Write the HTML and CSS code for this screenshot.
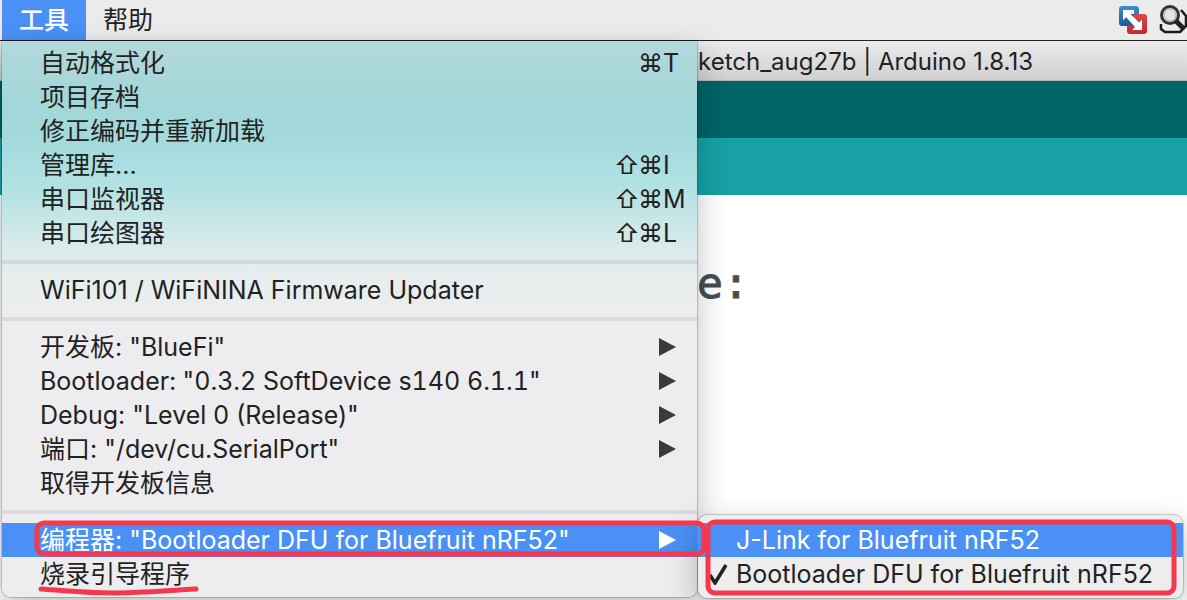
FILE: index.html
```html
<!DOCTYPE html>
<html lang="zh-CN">
<head>
<meta charset="utf-8">
<title>Arduino</title>
<link rel="stylesheet" href="styles.css">
</head>
<body>
<div class="desktop">
  <header class="menubar">
    <nav class="menubar-items">
      <button class="menubar-item active">工具</button>
      <button class="menubar-item">帮助</button>
    </nav>
    <div class="status">
      <svg class="vm-icon" viewBox="0 0 30 30" width="30" height="30" aria-hidden="true">
        <defs>
          <linearGradient id="blue" x1="0" y1="0" x2="0" y2="1"><stop offset="0" stop-color="#3d8fc9"/><stop offset="1" stop-color="#1d5b94"/></linearGradient>
          <linearGradient id="red" x1="0" y1="0" x2="0" y2="1"><stop offset="0" stop-color="#d9474e"/><stop offset="1" stop-color="#c5292f"/></linearGradient>
        </defs>
        <rect x="1" y="1" width="20" height="20" rx="3" fill="url(#blue)"/>
        <rect x="9" y="9" width="20" height="20" rx="3" fill="url(#red)"/>
        <path fill="#efefef" d="M5 5h11v4h-5l-6 6z"/>
        <path fill="#1f639d" d="M9 9h7v7l5 1v2l-2 2H9z"/>
        <path fill="#fff" d="M5 5h10l-3 3.500 9 9 3-3V25H14l3-3-9-10-3 3z"/>
      </svg>
      <svg class="search-icon" viewBox="0 0 28 30" width="28" height="30" aria-hidden="true">
        <path d="M2 19v5l4 3h15l6-6V11l-5-6" fill="#ececec" stroke="#1c1c1c" stroke-width="2.500"/>
        <circle cx="11" cy="10" r="8.500" fill="#e4e4e4" stroke="#333" stroke-width="3"/>
        <circle cx="11" cy="10" r="6" fill="none" stroke="#aaa" stroke-width="1"/>
        <path d="M17 16l8 8" stroke="#222" stroke-width="5"/>
      </svg>
    </div>
  </header>

  <main class="window">
    <div class="titlebar">ketch_aug27b | Arduino 1.8.13</div>
    <div class="toolbar"></div>
    <div class="tabs"></div>
    <div class="editor"><code class="code">e:</code></div>
  </main>

  <div class="menu tools-menu">
    <button class="item">自动格式化<span class="keys"><i></i><i>⌘</i><i>T</i></span></button>
    <button class="item">项目存档</button>
    <button class="item">修正编码并重新加载</button>
    <button class="item">管理库...<span class="keys"><i>⇧</i><i>⌘</i><i>I</i></span></button>
    <button class="item">串口监视器<span class="keys"><i>⇧</i><i>⌘</i><i>M</i></span></button>
    <button class="item">串口绘图器<span class="keys"><i>⇧</i><i>⌘</i><i>L</i></span></button>
    <hr class="separator">
    <button class="item">WiFi101 / WiFiNINA Firmware Updater</button>
    <hr class="separator">
    <button class="item">开发板: "BlueFi"<span class="arrow"></span></button>
    <button class="item version">Bootloader: "0.3.2 SoftDevice s140 6.1.1"<span class="arrow"></span></button>
    <button class="item">Debug: "Level 0 (Release)"<span class="arrow"></span></button>
    <button class="item">端口: "/dev/cu.SerialPort"<span class="arrow"></span></button>
    <button class="item">取得开发板信息</button>
    <hr class="separator">
    <button class="item selected">编程器: "Bootloader DFU for Bluefruit nRF52"<span class="arrow"></span></button>
    <button class="item">烧录引导程序</button>
  </div>

  <div class="menu submenu">
    <button class="item selected">J-Link for Bluefruit nRF52</button>
    <button class="item"><svg class="check" viewBox="0 0 20 22" width="20" height="22" aria-hidden="true"><path d="M2 12l5 8L18 2" fill="none" stroke="#222" stroke-width="3.500"/></svg>Bootloader DFU for Bluefruit nRF52</button>
  </div>

  <svg class="marks" viewBox="0 0 1187 100" width="1187" height="100" aria-hidden="true">
    <g fill="none" stroke="#f5384c" stroke-width="5" stroke-linecap="round">
      <rect x="37" y="23" width="667" height="31" rx="7"/>
      <rect x="708" y="22" width="466" height="71" rx="7"/>
      <path d="M41 89C70 91 85 93 115 93S160 91 196 89"/>
    </g>
  </svg>
</div>
</body>
</html>
```

FILE: styles.css
```css
* {
  box-sizing: border-box;
}

body {
  margin: 0;
  font-family: Inter, "Noto Sans CJK SC", sans-serif;
  font-size: 25px;
  color: #222;
}

button {
  border: 0;
  background: none;
  font: inherit;
  color: inherit;
  text-align: left;
}

.desktop {
  position: relative;
  display: flex;
  flex-direction: column;
  min-height: 100vh;
  overflow: hidden;
}

.menubar {
  display: flex;
  justify-content: space-between;
  height: 41px;
  padding-left: 2px;
  background: #ebebeb;
  border-bottom: 1px solid #222;
}

.menubar-items {
  display: flex;
}

.menubar-item {
  padding: 0 17px;
  line-height: 40px;
}

.menubar-item.active {
  background: #4a90f5;
  color: #fff;
  font-weight: 500;
}

.status {
  display: flex;
  align-items: center;
  gap: 11px;
}

.window {
  flex: 1;
  display: flex;
  flex-direction: column;
}

.titlebar {
  height: 40px;
  padding-right: 154px;
  line-height: 42px;
  font-size: 24px;
  text-align: right;
  background: linear-gradient(#ebebeb, #d0d0d0);
  border-bottom: 1px solid #b5b5b5;
}

.toolbar {
  height: 57px;
  background: #006468;
}

.tabs {
  height: 57px;
  background: #17a1a5;
}

.editor {
  flex: 1;
  padding: 60px 0 0 697px;
  background: #fff;
}

.code {
  font-family: "DejaVu Sans Mono", monospace;
  font-size: 43px;
  line-height: 56px;
  color: #434f54;
  -webkit-text-stroke: 1px #434f54;
}

.menu {
  position: absolute;
  border-radius: 0 0 9px 9px;
  box-shadow: 0 0 1px 1px rgba(0, 0, 0, 0.2), 0 12px 32px rgba(0, 0, 0, 0.25);
}

.tools-menu {
  top: 41px;
  left: 2px;
  width: 695px;
  padding: 5px 0 6px;
  background: linear-gradient(#b3d8da 0, #a3d7d9 60px, #a3dadc 100px, #b4e2e4 150px, #dcebec 210px, #e8edee 235px, #ededef 290px, #ededef 100%);
}

.submenu {
  top: 515px;
  left: 698px;
  width: 485px;
  padding: 8px 0 7px;
  border-radius: 9px;
  background: #ededed;
}

.item {
  position: relative;
  display: flex;
  align-items: center;
  width: 100%;
  height: 34px;
  padding: 0 0 0 38px;
  line-height: 34px;
  white-space: nowrap;
}

.version {
  font-variant-numeric: tabular-nums;
}

.selected {
  background: #4a90f5;
  color: #fff;
}

.keys {
  display: grid;
  grid-template-columns: 24px 25px 34px;
  margin-left: auto;
}

.keys i {
  font-style: normal;
}

.arrow {
  width: 17px;
  height: 18px;
  margin: 0 21px 0 auto;
  background: #3a3a3c;
  clip-path: polygon(0 0, 100% 50%, 0 100%);
}

.selected .arrow {
  background: #fff;
}

.separator {
  height: 23px;
  margin: 0;
  border: 0;
  background: linear-gradient(rgba(0, 0, 0, 0.08), rgba(0, 0, 0, 0.08)) center / 100% 4px no-repeat;
}

.check {
  position: absolute;
  left: 10px;
  top: 6px;
}

.marks {
  position: absolute;
  top: 500px;
  left: 0;
  pointer-events: none;
}
```
